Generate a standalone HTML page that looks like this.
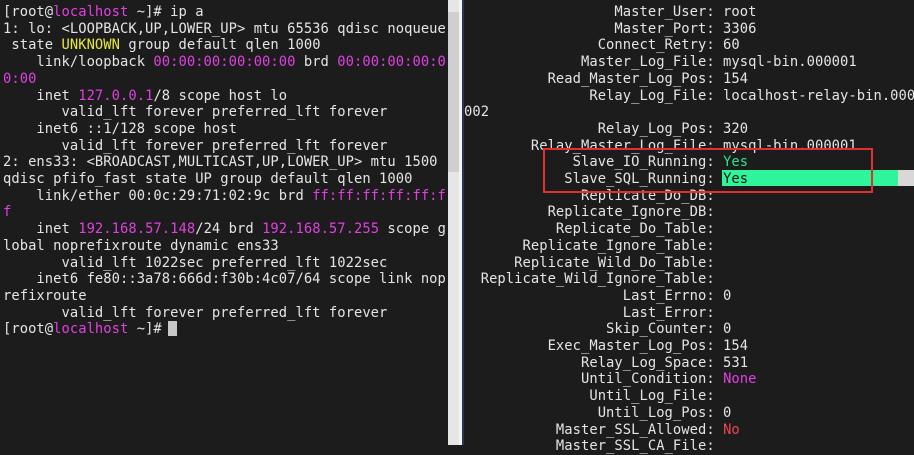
<!DOCTYPE html>
<html><head><meta charset="utf-8"><style>
html,body{margin:0;padding:0;width:914px;height:445px;overflow:hidden;background:#1c1c1c}
pre{margin:0;position:absolute;font-family:"DejaVu Sans Mono","Liberation Mono",monospace;font-size:13.8px;letter-spacing:0.05px;line-height:16.7px;color:#e4e4e4;white-space:pre}
.m{color:#e040e0}.y{color:#e8e840}.g{color:#30e090}.r{color:#ee4455}
</style></head><body>
<div style="position:absolute;left:0;top:0;width:448px;height:445px;background:#1c1c1c"></div>
<div style="position:absolute;left:448px;top:0;width:11px;height:445px;background:#e6e6e6"></div>
<div style="position:absolute;left:448px;top:12px;width:11px;height:160px;background:#cfcfcf"></div>
<div style="position:absolute;left:459px;top:0;width:3px;height:445px;background:#f4f4f4"></div>
<div style="position:absolute;left:462px;top:0;width:2px;height:445px;background:#2a3550"></div>
<pre style="left:3px;top:4px">[root@<span class="m">localhost</span> ~]# ip a
1: lo: &lt;LOOPBACK,UP,LOWER_UP&gt; mtu 65536 qdisc noqueue
 state <span class="y">UNKNOWN</span> group default qlen 1000
    link/loopback <span class="m">00:00:00:00:00:00</span> brd <span class="m">00:00:00:00:0
0:00</span>
    inet <span class="m">127.0.0.1</span>/8 scope host lo
       valid_lft forever preferred_lft forever
    inet6 ::1/128 scope host
       valid_lft forever preferred_lft forever
2: ens33: &lt;BROADCAST,MULTICAST,UP,LOWER_UP&gt; mtu 1500
qdisc pfifo_fast state UP group default qlen 1000
    link/ether 00:0c:29:71:02:9c brd <span class="m">ff:ff:ff:ff:ff:f
f</span>
    inet <span class="m">192.168.57.148</span>/24 brd <span class="m">192.168.57.255</span> scope g
lobal noprefixroute dynamic ens33
       valid_lft 1022sec preferred_lft 1022sec
    inet6 fe80::3a78:666d:f30b:4c07/64 scope link nop
refixroute
       valid_lft forever preferred_lft forever
[root@<span class="m">localhost</span> ~]# </pre>
<div style="position:absolute;left:168px;top:321px;width:9px;height:15px;background:#c8c8c8"></div>
<div style="position:absolute;left:722px;top:170px;width:176px;height:16px;background:#2ef59a"></div>
<div style="position:absolute;left:898px;top:170px;width:16px;height:16px;background:#d8d8d8"></div>
<pre style="left:464px;top:4px">                  Master_User: root
                  Master_Port: 3306
                Connect_Retry: 60
              Master_Log_File: mysql-bin.000001
          Read_Master_Log_Pos: 154
               Relay_Log_File: localhost-relay-bin.000
002
                Relay_Log_Pos: 320
        Relay_Master_Log_File: mysql-bin.000001
             Slave_IO_Running: <span class="g">Yes</span>
            Slave_SQL_Running: <span style="color:#111">Yes</span>
              Replicate_Do_DB:
          Replicate_Ignore_DB:
           Replicate_Do_Table:
       Replicate_Ignore_Table:
      Replicate_Wild_Do_Table:
  Replicate_Wild_Ignore_Table:
                   Last_Errno: 0
                   Last_Error:
                 Skip_Counter: 0
          Exec_Master_Log_Pos: 154
              Relay_Log_Space: 531
              Until_Condition: <span class="m">None</span>
               Until_Log_File:
                Until_Log_Pos: 0
           Master_SSL_Allowed: <span class="r">No</span>
           Master_SSL_CA_File:</pre>
<div style="position:absolute;left:543px;top:148px;width:326px;height:41px;border:2px solid #e03030"></div>
</body></html>
